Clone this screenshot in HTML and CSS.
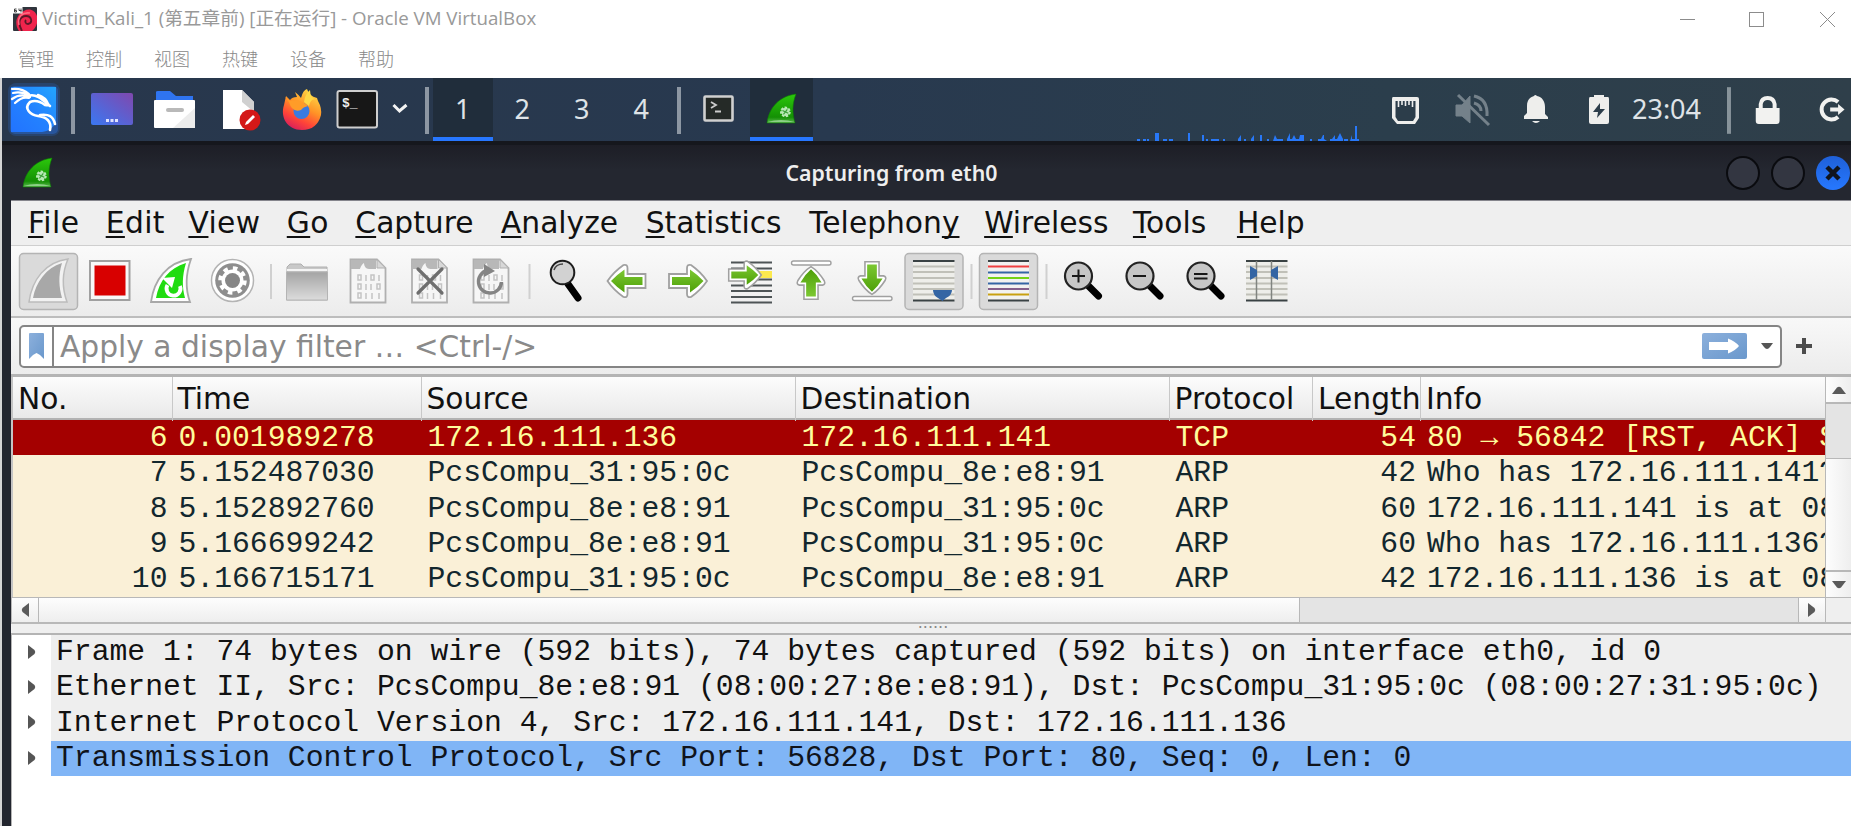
FILE: index.html
```html
<!DOCTYPE html>
<html lang="zh">
<head>
<meta charset="utf-8">
<title>Victim_Kali_1</title>
<link rel="stylesheet" href="styles.css">
</head>
<body>
<svg class="defs" width="0" height="0">
  <defs>
    <linearGradient id="kali" x1="0" y1="1" x2="1" y2="0"><stop offset="0" stop-color="#2273ff"/><stop offset=".5" stop-color="#2382ff"/><stop offset="1" stop-color="#23a5ff"/></linearGradient>
    <linearGradient id="desk" x1="0" y1="1" x2="1" y2="0"><stop offset="0" stop-color="#3a78f2"/><stop offset="1" stop-color="#8048ae"/></linearGradient>
    <linearGradient id="fox" x1=".8" y1="0" x2=".3" y2="1"><stop offset="0" stop-color="#ffe04a"/><stop offset=".45" stop-color="#ff9326"/><stop offset=".75" stop-color="#ff4438"/><stop offset="1" stop-color="#d81f5c"/></linearGradient>
    <linearGradient id="fin" x1="0" y1="0" x2="0" y2="1"><stop offset="0" stop-color="#2cc80c"/><stop offset=".8" stop-color="#149004"/><stop offset="1" stop-color="#5cb850"/></linearGradient>
    <linearGradient id="arrow" x1="0" y1="0" x2="0" y2="1"><stop offset="0" stop-color="#7cc832"/><stop offset="1" stop-color="#4ea008"/></linearGradient>
    <linearGradient id="folder" x1="0" y1="0" x2="0" y2="1"><stop offset="0" stop-color="#a4a4a4"/><stop offset="1" stop-color="#dcdcdc"/></linearGradient>
    <linearGradient id="blue" x1="0" y1="0" x2="1" y2="1"><stop offset="0" stop-color="#8cb0dc"/><stop offset="1" stop-color="#6a98cc"/></linearGradient>
    <symbol id="shark" viewBox="0 0 32 32">
      <path d="M1 31C3 15 14 3 31 1C27 11 27 21 30 31Z" fill="url(#fin)" stroke="#0d7a06" stroke-width=".6"/>
      <path d="M2 30C9 27 22 27 29 30Z" fill="#8cd086"/>
      <circle cx="20" cy="19.500" r="4.300" fill="#b8e8b4" stroke="#b8e8b4" stroke-width="2.500" stroke-dasharray="2.400 1.400"/>
      <path d="M17 18l6 3M18 22l4-5" stroke="#3aa038" stroke-width="1.200"/>
    </symbol>
    <symbol id="paper" viewBox="0 0 38 46">
      <path d="M1.500 1.500H28L36.500 10V44.500H1.500Z" fill="#f6f6f6" stroke="#b0b0b0" stroke-width="1.800"/>
      <path d="M2 2H27V11H20C17 11 15 8 15 5C12 7 11 11 11 11H2Z" fill="#b8b8b8"/>
      <path d="M28 1.500L36.500 10H28Z" fill="#d8d8d8" stroke="#b0b0b0"/>
      <g fill="none" stroke="#c4c4c4" stroke-width="1.500"><path d="M9 17h3v5h-3zM17 17v6M22 17h3v5h-3zM30 17v6M9 26h3v5h-3zM17 26v6M22 26v6M28 26h3v5h-3zM9 35h3v5h-3zM17 35v6M23 35v6M30 35v6"/></g>
    </symbol>
    <symbol id="right" viewBox="0 0 42 36">
      <path d="M2 11H20V5Q20 1 24 2C31 7 36 12 40 18C36 24 31 29 24 34Q20 35 20 31V25H2Z" fill="#fff" stroke="#a0a0a0" stroke-width="1.800"/>
      <path d="M5 14H23V6.500Q31 12 36.500 18Q31 24 23 29.500V22H5Z" fill="url(#arrow)"/>
    </symbol>
    <symbol id="down" viewBox="0 0 36 42">
      <path d="M10 2H26V18H31Q35 19 33 23C28 31 23 36 18 39C13 36 8 31 3 23Q1 19 5 18H10Z" fill="#fff" stroke="#a0a0a0" stroke-width="1.800"/>
      <path d="M12.500 5H23.500V21H30Q25 30 18 36Q11 30 6 21H12.500Z" fill="url(#arrow)"/>
    </symbol>
    <symbol id="lens" viewBox="0 0 42 42">
      <path d="M26 26L36 36" stroke="#000" stroke-width="7" stroke-linecap="round"/>
      <circle cx="16" cy="16" r="13.500" fill="#c6c6c6" stroke="#222" stroke-width="2.200"/>
    </symbol>
  </defs>
</svg>

<header class="host-title">
  <svg class="host-icon" viewBox="0 0 24 24"><rect width="24" height="24" rx="1" fill="#2f343c"/><path d="M24 9C22 3 16 1 11 4C3 8 1 17 6 24H19C25 19 25 12 24 9Z" fill="#f0244c"/><path d="M9 24C4 15 7 9 13 9C19 9 20 16 15 17C12 17 12 14 13 13" fill="none" stroke="#5c1828" stroke-width="1.800"/><path d="M6 18C4 9 10 5 17 6" fill="none" stroke="#ff6a80" stroke-width="1.600"/><rect width="9.500" height="6.500" fill="#fff"/><path d="M1.500 2h2M1.500 2v3h2v-1.500h-2M6 1.500v2h2.500M8 1.500v4" fill="none" stroke="#333" stroke-width=".9"/></svg>
  <span class="host-name">Victim_Kali_1 (第五章前) [正在运行] - Oracle VM VirtualBox</span>
  <svg class="host-buttons" width="171" height="38" viewBox="0 0 171 38" fill="none" stroke="#8c8c8c" stroke-width="1"><path d="M0 19.500H15"/><rect x="69.500" y="12.500" width="14" height="14"/><path d="M140 12L155 27M155 12L140 27"/></svg>
</header>
<nav class="host-menu"><span>管理</span><span>控制</span><span>视图</span><span>热键</span><span>设备</span><span>帮助</span></nav>

<main class="guest">
  <div class="panel">
    <svg class="launchers" width="431" height="63" viewBox="0 0 431 63">
      <rect x="8" y="8" width="48" height="48" rx="5" fill="#2878f4" opacity=".35"/>
      <rect x="6" y="5" width="52" height="53" rx="8" fill="#2878f4" opacity=".2"/>
      <path d="M9 9H54V44Q50 53 40 54H9Z" fill="url(#kali)"/>
      <g fill="none" stroke="#fff" stroke-linecap="round"><path d="M10 11Q20 10 27 16M11 15Q20 13 28 18M10 21Q18 15 28 19M13 25Q20 18 27 20" stroke-width="2.200"/><path d="M26 18C34 15 41 22 48 28M36 17C42 19 45 23 46 26M46 26Q48 28 43 27Q35 21 28 24C21 31 29 37 36 38C44 39 50 43 48 52M38 37C47 36 51 38 53 46" stroke-width="2.600"/></g>
      <rect x="69" y="9" width="4" height="47" fill="#8d97a3"/>
      <rect x="89" y="15" width="42" height="32" rx="2" fill="url(#desk)"/><path d="M104 41h3v3h-3zM108.500 41h3v3h-3zM113 41h3v3h-3z" fill="#dfe2ff"/>
      <path d="M154 14Q154 13 156 13H168L174 18H191V29H154Z" fill="#2f74f0"/><rect x="152" y="22" width="41" height="28" rx="1" fill="#fff"/><path d="M193 30V50H171Z" fill="#ececec"/><rect x="164" y="30" width="18" height="4" rx="2" fill="#b9b9b9"/>
      <path d="M221 12H240L252 24V51H221Z" fill="#fff"/><path d="M240 12V24L252 34V24Z" fill="#d0d0d0"/><circle cx="248" cy="42" r="10.500" fill="#d41818"/><path d="M243 47L244 44L251 37L253 39L246 46Z" fill="#fff"/>
      <g transform="translate(-1 0)"><path d="M285 18L289 22Q291 19 296 19L294 14Q298 17 300 20Q302 12 306 11Q308 18 316 20L317 23Q321 30 320 37Q316 52 301 52C286 52 279 39 283 27Z" fill="url(#fox)"/><circle cx="300.500" cy="33" r="8" fill="#3b7be0"/><path d="M284 19L289 23Q298 20 307 28Q302 29 300 32Q291 35 288 24Z" fill="#ff9c28"/><path d="M303 24Q304 16 309 12Q309 20 316 22Q310 19 308 28Z" fill="#ffd846"/></g>
      <rect x="335.500" y="13" width="39.500" height="36.500" rx="2" fill="#171717" stroke="#cfcfcf" stroke-width="2"/>
      <text x="340" y="29" class="prompt">$_</text>
      <path d="M391.500 27L397.500 33L404.500 27" fill="none" stroke="#f4f4f4" stroke-width="3"/>
      <rect x="423" y="9" width="4" height="47" fill="#8d97a3"/>
    </svg>
    <span class="space active">1</span><span class="space">2</span><span class="space">3</span><span class="space">4</span>
    <span class="rule"></span>
    <span class="task"><svg width="31" height="27" viewBox="0 0 31 27"><rect x="1.500" y="1.500" width="28" height="24" rx="1" fill="#252a27" stroke="#d0d0d0" stroke-width="2.600"/><path d="M8 7L13 10L8 13M12 16.500H18" fill="none" stroke="#ccc" stroke-width="1.800"/></svg></span>
    <span class="task active"><svg width="31" height="31"><use href="#shark"/></svg></span>
    <svg class="graph" width="226" height="16" viewBox="0 0 226 16"><path d="M1 16v-2h3v2zM7 16v-2h3v2zM11 16v-2h2v2zM19 16v-8h4v8zM27 16v-2h4v2zM33 16v-2h4v2zM52 16v-8h2v8zM66 16v-6h2v6zM70 16v-2h2v2zM75 16v-2h8v2zM87 16v-2h2v2zM102 16v-2l3-4v6zM108 16v-2h2v2zM115 16v-2l3-4v6zM124 16v-6h2v6zM131 16v-2h2v2zM137 16l2-6 2 4 6 0v2zM151 16v-2l3-6v6h2l2-4 2 4h3l1-4h4v6zM174 16v-2h2v2zM182 16v-2h3l2-4h1v4l3 2zM194 16v-2h2l3-4v4h2l3-6 3 6v2zM208 16v-2h4v2zM214 16l2-6v4h3v-13h2v13h2v2z" fill="#2878f8"/></svg>
    <svg class="tray" width="241" height="63" viewBox="0 0 241 63" fill="#eeeeec">
      <path d="M2 19H26Q28 19 28 21V40L24 46H6L1 40V21Q1 19 2 19Z"/><path d="M4.500 23H24.500V39L22 43H7L4.500 39Z" fill="#2c3d4a"/><path d="M7.500 22v7M11 22v5M14.500 22v6M18 22v5M21.500 22v7" stroke="#eee" stroke-width="1.600"/>
      <g fill="#74818a" stroke="#74818a"><path d="M65 27H71L79 18V45L71 38H65Z"/><path d="M83 18Q97 21 96 38M83 25Q90 27 90 33" fill="none" stroke-width="3"/><path d="M67 17L98 47" stroke-width="3"/></g>
      <path d="M133 41V38L136 35V28C136 21 140 19 143 18Q144 16 146 18C151 19 154 23 154 29V36L157 39V41ZM141 43H149Q145 47 141 43Z"/>
      <path d="M199 19H203V17H213V19H217Q218 19 218 21V44Q218 46 216 46H200Q198 46 198 44V21Q198 19 199 19Z"/><path d="M209 25L202 34H207L206 40L214 31H209Z" fill="#2c3d4a"/>
    </svg>
    <span class="clock">23:04</span>
    <svg class="session" width="125" height="63" viewBox="0 0 125 63" fill="#f2f2f0"><rect width="4" height="47" y="9" fill="#87939a"/><path d="M29 30H53V43Q53 46 50 46H32Q29 46 29 43ZM32 30V26Q33 18 41 18Q49 18 50 26V30H46V26Q45 22 41 22Q37 22 36 26V30Z"/><path d="M112 24A10 10 0 1 0 112 39" fill="none" stroke="#f2f2f0" stroke-width="4"/><path d="M104 29.500H112V26L118.500 31.500L112 37V33.500H104Z"/></svg>
  </div>

  <section class="window">
    <div class="caption">
      <svg class="caption-fin" width="31" height="31"><use href="#shark"/></svg>
      <span class="caption-text">Capturing from eth0</span>
      <div class="caption-buttons"><i></i><i></i><i class="close"><svg width="18" height="18" viewBox="0 0 18 18"><path d="M3 3L15 15M15 3L3 15" stroke="#10141c" stroke-width="4.500"/></svg></i></div>
    </div>
    <div class="app">
      <nav class="menubar">
        <span><u>F</u>ile</span><span><u>E</u>dit</span><span><u>V</u>iew</span><span><u>G</u>o</span><span><u>C</u>apture</span><span><u>A</u>nalyze</span><span><u>S</u>tatistics</span><span>Telephon<u>y</u></span><span><u>W</u>ireless</span><span><u>T</u>ools</span><span><u>H</u>elp</span>
      </nav>
      <div class="toolbar">
        <svg width="1300" height="70" viewBox="11 246 1300 70">
          <g fill="#dadada" stroke="#b4b4b4" stroke-width="1.500"><rect x="19.500" y="253.500" width="58" height="56" rx="4"/><rect x="905" y="253.500" width="58" height="56" rx="4"/><rect x="979.500" y="253.500" width="58" height="56" rx="4"/></g>
          <path d="M29 302C32 280 45 262 68 259C62 273 62 288 67 302Z" fill="#f2f2f2" stroke="#bcbcbc" stroke-width="1.500"/><path d="M33 298C36 282 46 268 62 263C58 276 59 287 62 298Z" fill="#a8a8a8"/>
          <rect x="90" y="261" width="39.500" height="39" fill="#f8f8f8" stroke="#a0a0a0" stroke-width="2"/><rect x="94.500" y="265.500" width="31" height="30" fill="#d80000"/>
          <path d="M151 302C154 280 167 262 191 259C186 273 185 288 190 302Z" fill="#fff" stroke="#a8a8a8" stroke-width="1.800"/><path d="M156 298C159 281 169 268 186 263C182 276 182 287 185 298Z" fill="#20dc10"/><path d="M180 286A7 7 0 1 1 167.500 285" fill="none" stroke="#fff" stroke-width="3.800"/><path d="M162 278L175 277L172 288Z" fill="#fff"/>
          <circle cx="232.500" cy="280.500" r="21" fill="#fff" stroke="#b4b4b4" stroke-width="1.500"/><circle cx="232.500" cy="280.500" r="17.300" fill="#8e8e8e"/><circle cx="232.500" cy="280.500" r="12" fill="none" stroke="#fff" stroke-width="4.500" stroke-dasharray="4.400 5.025"/><circle cx="232.500" cy="280.500" r="11" fill="#fff"/><circle cx="232.500" cy="280.500" r="7.500" fill="#868686"/>
          <g stroke="#d0d0d0" stroke-width="2"><path d="M271 264V299M529.500 264V299M971.500 264V299M1046.500 264V299"/></g>
          <path d="M287 270V267L290 264H301L304 267H327V300H287Z" fill="#c8c8c8" stroke="#b0b0b0"/><rect x="286.500" y="272" width="41" height="28" fill="url(#folder)" stroke="#b4b4b4"/><path d="M287 270H327" stroke="#f4f4f4" stroke-width="2"/>
          <use href="#paper" x="349" y="258" width="38" height="46"/><use href="#paper" x="410.500" y="258" width="38" height="46"/><use href="#paper" x="472" y="258" width="38" height="46"/>
          <path d="M418 269L442 293M442 269L418 293" stroke="#6e6e6e" stroke-width="3.200" stroke-linecap="round"/>
          <path d="M501.500 282A11.500 11.500 0 1 1 487 270.500" fill="none" stroke="#848484" stroke-width="3.500"/><path d="M484 264L495 271L484 277Z" fill="#848484"/>
          <path d="M568 284L578 298" stroke="#000" stroke-width="7" stroke-linecap="round"/><circle cx="562.500" cy="272.500" r="11.800" fill="#d2d2d2" stroke="#1c1c1c" stroke-width="2"/><path d="M554 270Q556 264 563 264" fill="none" stroke="#444" stroke-width="1.500"/>
          <use href="#right" x="-649" y="262.500" width="42" height="37" transform="scale(-1 1) translate(1.500 0)"/>
          <use href="#right" x="667" y="262.500" width="42" height="37"/>
          <g stroke="#4e5456" stroke-width="2.200"><path d="M731 262.500H772M731 268.500H772M731 279.500H772M731 285.500H772M731 291H772M731 297H772M731 302.500H772"/></g><rect x="758" y="271" width="14" height="7" fill="#fce94f"/><use href="#right" x="727" y="258" width="36" height="34"/>
          <rect x="791.500" y="261" width="39.500" height="4" rx="2" fill="#fff" stroke="#a0a0a0" stroke-width="1.400"/><use href="#down" x="793" y="-301" width="36" height="37" transform="scale(1 -1)"/>
          <rect x="852.500" y="296.500" width="39.500" height="4" rx="2" fill="#fff" stroke="#a0a0a0" stroke-width="1.400"/><use href="#down" x="854" y="260" width="36" height="37"/>
          <rect x="913" y="261" width="41.500" height="40" fill="#eeeeea"/><path d="M913 266.500H954.500M913 272H954.500M913 278H954.500M913 283.500H954.500M913 289H954.500M913 294.500H954.500" stroke="#c0c0b8" stroke-width="1.800"/><path d="M913 261H954.500M913 300.500H954.500" stroke="#3a4244" stroke-width="2"/><path d="M933 290H952Q952 295 946 298L942.500 301L938 298Q933 295 933 290Z" fill="#3465a4"/>
          <rect x="988" y="261" width="41" height="40" fill="#f2f2f0"/><g stroke-width="2"><path d="M988 261H1029M988 300.500H1029" stroke="#3a4244"/><path d="M988 266.500H1029" stroke="#ef4040"/><path d="M988 272.500H1029" stroke="#3465a4"/><path d="M988 278H1029" stroke="#73d216"/><path d="M988 283.500H1029" stroke="#3465a4"/><path d="M988 289H1029" stroke="#85608b"/><path d="M988 294.500H1029" stroke="#c8a010"/></g>
          <use href="#lens" x="1062.500" y="260" width="42" height="42"/><use href="#lens" x="1124" y="260" width="42" height="42"/><use href="#lens" x="1185" y="260" width="42" height="42"/>
          <path d="M1072 276H1085M1078.500 269.500V282.500M1133 276H1146M1194 274H1207.500M1194 278.500H1207.500" stroke="#181818" stroke-width="2"/>
          <rect x="1246" y="261" width="41.500" height="40" fill="#eeeeea"/><path d="M1246 266.500H1287.500M1246 272H1287.500M1246 278H1287.500M1246 283.500H1287.500M1246 289H1287.500M1246 294.500H1287.500" stroke="#c0c0b8" stroke-width="1.800"/><path d="M1246 261H1287.500M1246 300.500H1287.500" stroke="#3a4244" stroke-width="2"/><path d="M1256.500 261V300M1271.500 261V300" stroke="#808480" stroke-width="1.500"/><path d="M1250 266L1257 270V276L1250 280ZM1278 266L1271 270V276L1278 280Z" fill="#3465a4"/>
        </svg>
      </div>
      <div class="filterbar">
        <div class="filter">
          <span class="bookmark"><svg width="15" height="26" viewBox="0 0 15 26"><path d="M0 1Q0 0 1 0H14Q15 0 15 1V26L11 22L7.500 20L4 22L0 26Z" fill="url(#blue)"/></svg></span>
          <span class="placeholder">Apply a display filter … &lt;Ctrl-/&gt;</span>
          <svg width="72" height="28" viewBox="0 0 72 28"><rect y="1" width="45" height="26" rx="2" fill="url(#blue)"/><path d="M7 10H26V6.500Q33 9 37 14Q33 19 26 21.500V18H7Z" fill="#fff"/><path d="M59 11H71L68 15Q65 19 62 15Z" fill="#555"/></svg>
        </div>
        <svg width="16" height="16" viewBox="0 0 16 16"><path d="M8 0V16M0 8H16" stroke="#4c4c4c" stroke-width="4"/></svg>
      </div>
      <div class="list">
        <div class="grid">
          <div class="head"><span>No.</span><span>Time</span><span>Source</span><span>Destination</span><span>Protocol</span><span>Length</span><span>Info</span></div>
          <div class="row selected"><span>6</span><span>0.001989278</span><span>172.16.111.136</span><span>172.16.111.141</span><span>TCP</span><span>54</span><span>80 → 56842 [RST, ACK] S</span></div>
          <div class="row"><span>7</span><span>5.152487030</span><span>PcsCompu_31:95:0c</span><span>PcsCompu_8e:e8:91</span><span>ARP</span><span>42</span><span>Who has 172.16.111.141?</span></div>
          <div class="row"><span>8</span><span>5.152892760</span><span>PcsCompu_8e:e8:91</span><span>PcsCompu_31:95:0c</span><span>ARP</span><span>60</span><span>172.16.111.141 is at 08</span></div>
          <div class="row"><span>9</span><span>5.166699242</span><span>PcsCompu_8e:e8:91</span><span>PcsCompu_31:95:0c</span><span>ARP</span><span>60</span><span>Who has 172.16.111.136?</span></div>
          <div class="row"><span>10</span><span>5.166715171</span><span>PcsCompu_31:95:0c</span><span>PcsCompu_8e:e8:91</span><span>ARP</span><span>42</span><span>172.16.111.136 is at 08</span></div>
        </div>
        <div class="vscroll"><b><svg width="14" height="8"><path d="M0 8L5 1.500Q7 0 9 1.500L14 8Z" fill="#5a5a5a"/></svg></b><i></i><em></em><b><svg width="14" height="8"><path d="M0 0H14L9 6.500Q7 8 5 6.500Z" fill="#5a5a5a"/></svg></b></div>
        <div class="hscroll"><b><svg width="8" height="14"><path d="M8 0V14L1.500 9Q0 7 1.500 5Z" fill="#5a5a5a"/></svg></b><em></em><i></i><b><svg width="8" height="14"><path d="M0 0V14L6.500 9Q8 7 6.500 5Z" fill="#5a5a5a"/></svg></b></div>
        <div class="corner"></div>
      </div>
      <div class="splitter">······</div>
      <div class="details">
        <div class="node"><svg width="8" height="14"><path d="M0 0V14L6.500 9Q8 7 6.500 5Z" fill="#555"/></svg><span>Frame 1: 74 bytes on wire (592 bits), 74 bytes captured (592 bits) on interface eth0, id 0</span></div>
        <div class="node"><svg width="8" height="14"><path d="M0 0V14L6.500 9Q8 7 6.500 5Z" fill="#555"/></svg><span>Ethernet II, Src: PcsCompu_8e:e8:91 (08:00:27:8e:e8:91), Dst: PcsCompu_31:95:0c (08:00:27:31:95:0c)</span></div>
        <div class="node"><svg width="8" height="14"><path d="M0 0V14L6.500 9Q8 7 6.500 5Z" fill="#555"/></svg><span>Internet Protocol Version 4, Src: 172.16.111.141, Dst: 172.16.111.136</span></div>
        <div class="node current"><svg width="8" height="14"><path d="M0 0V14L6.500 9Q8 7 6.500 5Z" fill="#555"/></svg><span>Transmission Control Protocol, Src Port: 56828, Dst Port: 80, Seq: 0, Len: 0</span></div>
      </div>
    </div>
  </section>
</main>
</body>
</html>
```

FILE: styles.css
```css
* { box-sizing: border-box; }
body { margin: 0; width: 1851px; height: 826px; overflow: hidden; background: #fff; display: flex; flex-direction: column; }
svg { display: block; flex: none; }
.defs { position: absolute; }

/* host window */
.host-title { height: 38px; display: flex; align-items: center; padding-left: 13px; color: #999; font: 18.700px "Open Sans", "Noto Sans CJK SC", sans-serif; }
.host-icon { width: 24px; height: 24px; }
.host-name { margin-left: 5px; flex: 1; line-height: 26px; padding-bottom: 2px; white-space: nowrap; }
.host-menu { height: 40px; display: flex; padding: 7px 0 0 18px; font: 300 18px/26px "Noto Sans CJK SC", sans-serif; color: #888; }
.host-menu span { width: 68px; }

/* guest desktop */
.guest { flex: 1; margin-left: 2px; display: flex; flex-direction: column; background: #22252e; box-shadow: -2px 0 #d4d4d4; }
.panel { position: relative; height: 63px; display: flex; align-items: stretch; background: linear-gradient(90deg, #28374c, #28394f 45%, #2b3e4c 75%, #2f3f4a); font: 27px "Noto Sans", sans-serif; color: #dfe3e7; }
.space, .task { display: flex; align-items: center; justify-content: center; width: 59.500px; border-bottom: 4px solid transparent; line-height: 59px; }
.space { font-size: 27px; padding-top: 2px; }
.task { width: 63px; padding-top: 2px; }
.active { background: #202d3b; border-bottom-color: #2777ff; }
.rule { width: 4px; height: 47px; margin: 9px 6px 0 6px; background: #8d97a3; }
.graph { position: absolute; left: 1134px; bottom: 0; }
.prompt { font: bold 13px "Liberation Mono", monospace; fill: #eee; }
.tray { margin-left: 578px; }
.clock { width: 95px; line-height: 61px; white-space: nowrap; }
.session { flex: 1; }

/* application window */
.window { flex: 1; display: flex; flex-direction: column; border-top: 4px solid #15171d; }
.caption { height: 55px; display: flex; align-items: center; justify-content: space-between; background: linear-gradient(#1d1e26, #242730 45%); }
.caption-fin { margin: 0 0 1px 20px; }
.caption-text { margin-left: 4px; padding-bottom: 1px; font: 600 21.300px "Noto Sans", sans-serif; color: #eee; }
.caption-buttons { display: flex; gap: 11px; padding-right: 1px; }
.caption-buttons i { width: 34px; height: 34px; border-radius: 50%; border: 2px solid #0a0b0f; background: #333641; }
.caption-buttons .close { display: flex; align-items: center; justify-content: center; border: 0; background: linear-gradient(#1f60d8, #2678ff); }
.app { flex: 1; margin-left: 9px; border-top: 1px solid #85858c; background: #efefef; font-family: "DejaVu Sans", sans-serif; font-size: 29.730px; color: #111; display: flex; flex-direction: column; }
.menubar { height: 44px; display: grid; grid-template-columns: 77.700px 82.700px 98.400px 68.600px 145.600px 144.700px 163.600px 174.900px 148.800px 104px 80px; padding-left: 17px; line-height: 43px; white-space: nowrap; }
.menubar span:nth-child(-n+4) { letter-spacing: .4px; }
.menubar u { text-decoration-thickness: 2px; text-underline-offset: 3px; text-decoration-skip-ink: none; }
.toolbar { height: 73px; border-top: 1px solid #cfcfcf; border-bottom: 2px solid #bdbdbd; background: linear-gradient(#fafafa, #ececec); }
.filterbar { height: 59px; display: flex; align-items: center; gap: 14px; padding: 0 0 0 8px; background: linear-gradient(#f8f8f8, #ececec); border-bottom: 3px solid #b4b4b4; }
.filter { width: 1763px; height: 43px; display: flex; align-items: center; padding-right: 6px; background: #fff; border: 2px solid #858585; border-radius: 5px; }
.bookmark { align-self: stretch; width: 33px; display: flex; align-items: center; justify-content: center; padding-right: 1px; border-right: 2px solid #858585; }
.placeholder { flex: 1; padding-left: 6px; color: #8a8a8a; line-height: 39px; }

/* packet list */
.list { height: 247px; display: grid; grid-template-columns: 1814px 1fr; grid-template-rows: 220px 27px; }
.grid { overflow: hidden; border-left: 2px solid #c4c4c4; background: #faf0d7; }
.head, .row { display: grid; grid-template-columns: 159.500px 249px 374px 374px 143.500px 108px 1fr; white-space: nowrap; }
.head { height: 43px; line-height: 44px; background: linear-gradient(#fcfcfc, #e9e9e9); border-bottom: 2px solid #b2b2b2; }
.head span { padding-left: 5px; border-right: 1px solid #c8c8c8; }
.head span:last-child { border-right: 0; }
.row { height: 35.330px; line-height: 37px; font-family: "Liberation Mono", monospace; color: #12272e; }
.row span { padding-left: 6px; }
.row span:nth-child(1), .row span:nth-child(6) { text-align: right; padding: 0 5px 0 0; }
.selected { background: #a40000; color: #fffc9c; }
.vscroll, .hscroll { display: flex; background: linear-gradient(90deg, #fdfdfd, #eee); border: 0 solid #b8b8b8; }
.vscroll { flex-direction: column; border-left-width: 1px; }
.hscroll { border-width: 1px 0 2px 1px; background: linear-gradient(#fdfdfd, #eee); }
.vscroll b, .hscroll b { flex: none; display: flex; align-items: center; justify-content: center; }
.vscroll b { height: 25px; }
.vscroll i { height: 57px; background: #e4e4e4; border: solid #b8b8b8; border-width: 2px 0 1px; }
.vscroll em { flex: 1; border-bottom: 2px solid #b8b8b8; }
.hscroll b { width: 26px; }
.hscroll em { width: 1262px; border: 1px solid #b8b8b8; border-width: 0 1px; }
.hscroll i { flex: 1; background: #e4e4e4; border-right: 1px solid #b8b8b8; }
.corner { border: solid #b8b8b8; border-width: 1px 0 2px 1px; }
.splitter { height: 9px; text-align: center; line-height: 8px; font-size: 16px; color: #888; padding-left: 4px; }

/* packet details */
.details { flex: 1; background: #fff; border: solid #b4b4b4; border-width: 2px 0 0 1px; }
.node { height: 35.330px; display: flex; align-items: center; padding-left: 16px; font-family: "Liberation Mono", monospace; line-height: 35.330px; white-space: nowrap; color: #111; }
.node svg { margin-bottom: 2px; }
.node span { flex: 1; margin-left: 15px; padding-left: 5px; background: #eee; }
.current span { background: #80b5f6; color: #10141c; }
```
